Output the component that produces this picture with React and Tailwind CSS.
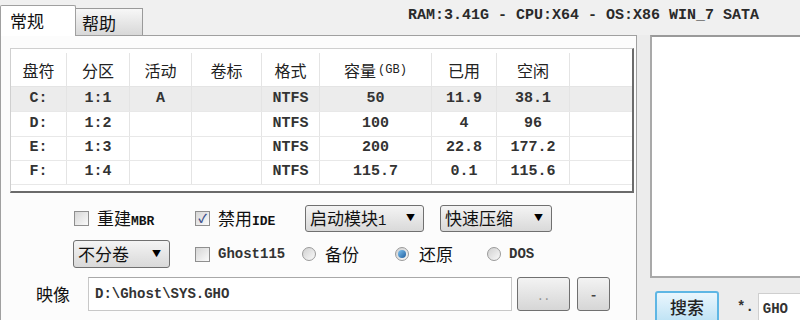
import React from "react";

const cols = "grid grid-cols-[56px_63px_62px_70px_58px_112px_65px_73px_1fr]";

const rows = [
    {d: "C:", p: "1:1", a: "A", f: "NTFS", cap: "50", used: "11.9", free: "38.1", h: "h-[25px]", sel: true},
    {d: "D:", p: "1:2", a: "", f: "NTFS", cap: "100", used: "4", free: "96", h: "h-[25px]"},
    {d: "E:", p: "1:3", a: "", f: "NTFS", cap: "200", used: "22.8", free: "177.2", h: "h-[24px]"},
    {d: "F:", p: "1:4", a: "", f: "NTFS", cap: "115.7", used: "0.1", free: "115.6", h: "h-[24px]"},
];

const Cell = ({children, last}) => (
    <div className={`flex items-center justify-center ${last ? "" : "border-r border-[#e4e4e4]"}`}>
        {children}
    </div>
);

const Check = ({checked}) => (
    <span className="w-[15px] h-[15px] border border-[#8f8f8f] bg-gradient-to-br from-[#d6d6d6] to-[#fbfbfb] flex items-center justify-center">
        {checked ? <span className="text-[#3a4f8c] text-[12px] leading-none font-bold">✓</span> : null}
    </span>
);

const Radio = ({checked}) => (
    <span className="w-[14px] h-[14px] rounded-full border border-[#9a9a9a] bg-gradient-to-br from-[#d0d0d0] to-[#fafafa] flex items-center justify-center">
        {checked ? <span className="w-[8px] h-[8px] rounded-full bg-gradient-to-br from-[#7fc4f2] to-[#1f5f9e]"/> : null}
    </span>
);

const Drop = ({label, w, h}) => (
    <div className={`${w} ${h} border border-[#707070] rounded-[3px] bg-gradient-to-b from-[#f4f4f4] to-[#d9d9d9] flex items-center justify-between pl-[4px] pr-[8px] text-[17px] text-[#111]`}>
        <span>{label}</span>
        <span className="text-[9px] text-black">▼</span>
    </div>
);

const mono = "font-['Liberation_Mono',monospace]";

const App = () => {
    return (
        <div className="w-[800px] h-[320px] overflow-hidden bg-[#f0f0f0] font-['Noto_Sans_CJK_SC',sans-serif] text-[#111]">
            <div className="flex items-end h-[35px]">
                <div className="relative z-10 -mb-px w-[76px] h-[31px] bg-white border border-b-0 border-[#a0a0a0] rounded-t-[2px] pl-[9px] pt-[2px] text-[17px]">
                    常规
                </div>
                <div className="w-[67px] h-[27px] border border-b-0 border-l-0 border-[#9a9a9a] bg-gradient-to-b from-[#f7f7f7] to-[#d8d8d8] pl-[6px] text-[17px] leading-[27px]">
                    帮助
                </div>
                <div className={`self-start mt-[5px] ml-[265px] ${mono} font-bold text-[15px] text-[#2a2a2a]`}>
                    RAM:3.41G - CPU:X64 - OS:X86 WIN_7 SATA
                </div>
            </div>

            <div className="flex h-[285px]">
                <div className="w-[637px] border border-b-0 border-[#a0a0a0] bg-[#fcfcfc] pt-[12px] pl-[9px]">
                    <div className="w-[624px] h-[145px] border-t border-l border-[#cfcfcf] border-r-2 border-b-2 border-r-[#6b6b6b] border-b-[#6b6b6b] bg-white">
                        <div className={`${cols} h-[38px] pt-[4px] border-b border-[#e4e4e4] text-[16px] text-[#222]`}>
                            <Cell>盘符</Cell>
                            <Cell>分区</Cell>
                            <Cell>活动</Cell>
                            <Cell>卷标</Cell>
                            <Cell>格式</Cell>
                            <Cell>容量<span className={`${mono} text-[12px] ml-[2px]`}>(GB)</span></Cell>
                            <Cell>已用</Cell>
                            <Cell>空闲</Cell>
                            <Cell last/>
                        </div>
                        {rows.map((r) => (
                            <div key={r.d}
                                 className={`${cols} ${r.h} border-b border-[#e8e8e8] ${r.sel ? "bg-[#ececec]" : ""} ${mono} font-bold text-[15px] text-[#333]`}>
                                <Cell>{r.d}</Cell>
                                <Cell>{r.p}</Cell>
                                <Cell>{r.a}</Cell>
                                <Cell/>
                                <Cell>{r.f}</Cell>
                                <Cell>{r.cap}</Cell>
                                <Cell>{r.used}</Cell>
                                <Cell>{r.free}</Cell>
                                <Cell last/>
                            </div>
                        ))}
                    </div>

                    {/* options */}
                    <div className="flex items-center h-[28px] mt-[11px] ml-[64px] text-[17px]">
                        <div className="w-[121px] flex items-center gap-[8px]">
                            <Check/>
                            <span>重建<span className={`${mono} font-bold text-[13px]`}>MBR</span></span>
                        </div>
                        <div className="w-[110px] flex items-center gap-[8px]">
                            <Check checked/>
                            <span>禁用<span className={`${mono} font-bold text-[13px]`}>IDE</span></span>
                        </div>
                        <Drop label={<>启动模块<span className={`${mono} text-[14px]`}>1</span></>} w="w-[119px]" h="h-[27px]"/>
                        <div className="ml-[16px]">
                            <Drop label="快速压缩" w="w-[112px]" h="h-[27px]"/>
                        </div>
                    </div>

                    <div className="flex items-center h-[28px] mt-[8px] ml-[63px] text-[17px]">
                        <Drop label="不分卷" w="w-[97px]" h="h-[28px]"/>
                        <div className="ml-[25px] w-[107px] flex items-center gap-[8px]">
                            <Check/>
                            <span className={`${mono} font-bold text-[14px] text-[#333]`}>Ghost115</span>
                        </div>
                        <div className="w-[93px] flex items-center gap-[9px]">
                            <Radio/>
                            <span>备份</span>
                        </div>
                        <div className="w-[92px] flex items-center gap-[10px]">
                            <Radio checked/>
                            <span>还原</span>
                        </div>
                        <div className="flex items-center gap-[8px]">
                            <Radio/>
                            <span className={`${mono} font-bold text-[14px] text-[#333]`}>DOS</span>
                        </div>
                    </div>

                    <div className="flex items-center h-[34px] mt-[9px] ml-[26px]">
                        <span className="w-[52px] text-[17px]">映像</span>
                        <div className={`w-[424px] h-[34px] border border-[#c8c8c8] border-t-[#a8a8a8] bg-white flex items-center pl-[6px] ${mono} font-bold text-[14px] text-[#333]`}>
                            D:\Ghost\SYS.GHO
                        </div>
                        <div className="ml-[5px] w-[53px] h-[34px] border border-[#707070] rounded-[3px] bg-gradient-to-b from-[#f3f3f3] to-[#d6d6d6] flex items-center justify-center text-[#888] text-[13px] leading-none">
                            . .
                        </div>
                        <div className="ml-[7px] w-[33px] h-[34px] border border-[#707070] rounded-[3px] bg-gradient-to-b from-[#f3f3f3] to-[#d6d6d6] flex items-center justify-center text-[#444] text-[14px] font-bold">
                            -
                        </div>
                    </div>
                </div>

                <div className="flex-1 bg-[#ececec] pl-[13px]">
                    <div className="h-[243px] border-2 border-r-0 border-[#a9a9a9] border-t-[#9a9a9a] bg-white"/>
                    <div className="flex items-center mt-[13px]">
                        <div className="ml-[5px] w-[64px] h-[32px] rounded-[3px] border-2 border-[#5eb6e4] bg-gradient-to-b from-[#eaf6fd] to-[#bfe3f5] flex items-center justify-center text-[17px] font-medium text-[#222]">
                            搜索
                        </div>
                        <span className={`ml-[18px] ${mono} font-bold text-[14px] text-[#333]`}>*.</span>
                        <div className={`ml-[4px] flex-1 h-[30px] mt-[2px] border-t border-l border-[#cfcfcf] bg-white pl-[4px] pt-[5px] ${mono} font-bold text-[14px] text-[#333]`}>
                            GHO
                        </div>
                    </div>
                </div>
            </div>
        </div>
    );
};

export default App;
